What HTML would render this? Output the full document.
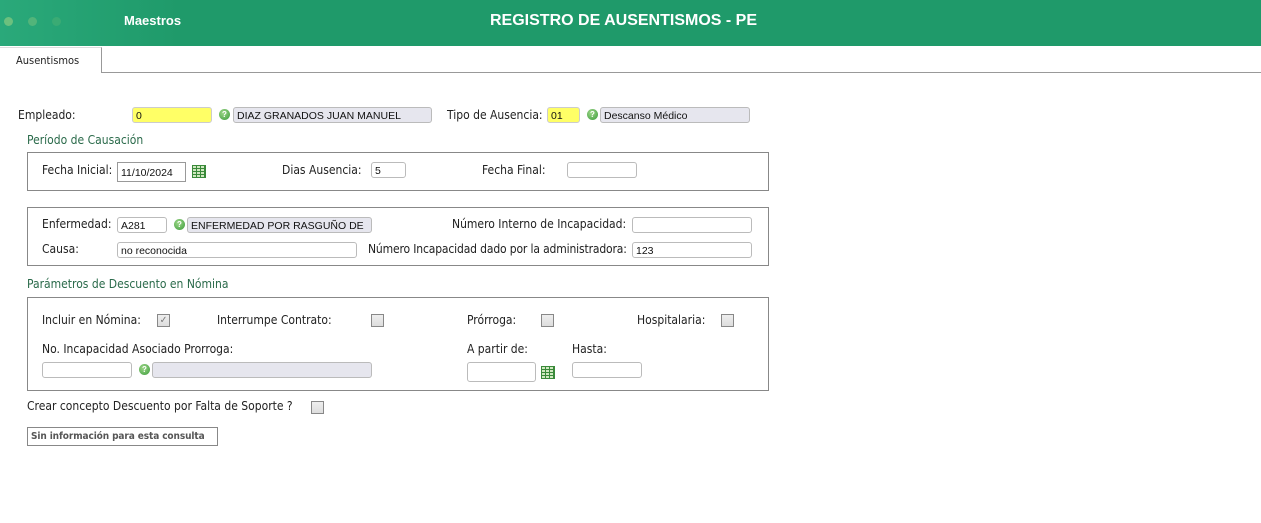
<!DOCTYPE html>
<html><head><meta charset="utf-8"><style>
*{margin:0;padding:0;box-sizing:border-box}
body{width:1261px;height:523px;background:#fff;position:relative;overflow:hidden;font-family:"DejaVu Sans Condensed","Liberation Sans",sans-serif;font-size:12px;color:#222}
.a{position:absolute;white-space:nowrap}
.hdr{position:absolute;left:0;top:0;width:1261px;height:46px;background:linear-gradient(90deg,#2aa97a 0,#1f9a6a 180px,#1f9a6a 100%)}
.dot{position:absolute;top:17px;width:9px;height:9px;border-radius:50%}
.l{position:absolute;white-space:nowrap;line-height:14px;transform:translateY(-7px)}
.in{position:absolute;height:16px;border:1px solid #bbb;border-radius:3px;background:#fff;font-size:10.5px;line-height:15px;padding-left:3px;padding-top:1px;font-family:"Liberation Sans",sans-serif;color:#111;white-space:nowrap;overflow:hidden}
.y{background:#ffff66;border-color:#ccc}
.g{background:#e6e6ee;border-color:#bbb}
.box{position:absolute;left:27px;width:742px;border:1px solid #888}
.cb{position:absolute;width:13px;height:13px;border:1px solid #888;background:linear-gradient(#eee,#ddd)}
.q{position:absolute;width:11px;height:11px;border-radius:50%;background:radial-gradient(circle at 40% 35%,#9fd88a,#3a9a3a);color:#fff;font-size:8px;font-weight:bold;line-height:11px;text-align:center;font-family:"Liberation Sans",sans-serif}
.cal{position:absolute;width:14px;height:13px;border:1px solid #3a8a3a;background:
repeating-linear-gradient(90deg,transparent 0 3px,#3a8a3a 3px 4px),repeating-linear-gradient(0deg,#cfe8bf 0 2px,#3a8a3a 2px 3px)}
.sec{color:#2a6a4a}
</style></head><body>
<div class="hdr">
<div class="dot" style="left:4px;background:#6cc07e"></div>
<div class="dot" style="left:28px;background:#52b47a"></div>
<div class="dot" style="left:52px;background:#3aab74"></div>
<div class="a" style="left:124px;top:13px;color:#fff;font-weight:bold;font-size:13px;font-family:'Liberation Sans',sans-serif">Maestros</div>
<div class="a" style="left:490px;top:12px;color:#fff;font-weight:bold;font-size:16px;font-family:'Liberation Sans',sans-serif">REGISTRO DE AUSENTISMOS - PE</div>
</div>
<div class="a" style="left:0;top:47px;width:102px;height:26px;border-right:1px solid #999;border-top:1px solid #ddd;background:#fff"></div>
<div class="a" style="left:101px;top:72px;width:1160px;height:1px;background:#999"></div>
<div class="l" style="left:16px;top:61px;font-size:11px">Ausentismos</div>

<div class="l" style="left:18px;top:115px">Empleado:</div>
<div class="in y" style="left:132px;top:107px;width:80px">0</div>
<div class="q" style="left:219px;top:109px">?</div>
<div class="in g" style="left:233px;top:107px;width:199px">DIAZ GRANADOS JUAN MANUEL</div>
<div class="l" style="left:447px;top:115px">Tipo de Ausencia:</div>
<div class="in y" style="left:547px;top:107px;width:33px">01</div>
<div class="q" style="left:587px;top:109px">?</div>
<div class="in g" style="left:600px;top:107px;width:150px">Descanso Médico</div>

<div class="l sec" style="left:27px;top:140px">Período de Causación</div>
<div class="box" style="top:152px;height:39px"></div>
<div class="l" style="left:42px;top:170px">Fecha Inicial:</div>
<div class="in" style="left:117px;top:162px;width:69px;height:20px;border-radius:0;line-height:18px;border-color:#999">11/10/2024</div>
<div class="cal" style="left:192px;top:165px"></div>
<div class="l" style="left:282px;top:170px">Dias Ausencia:</div>
<div class="in" style="left:371px;top:162px;width:35px">5</div>
<div class="l" style="left:482px;top:170px">Fecha Final:</div>
<div class="in" style="left:567px;top:162px;width:70px"></div>

<div class="box" style="top:207px;height:59px"></div>
<div class="l" style="left:42px;top:224px">Enfermedad:</div>
<div class="in" style="left:117px;top:217px;width:50px">A281</div>
<div class="q" style="left:174px;top:219px">?</div>
<div class="in g" style="left:187px;top:217px;width:185px">ENFERMEDAD POR RASGUÑO DE</div>
<div class="l" style="left:452px;top:224px">Número Interno de Incapacidad:</div>
<div class="in" style="left:632px;top:217px;width:120px"></div>
<div class="l" style="left:42px;top:249px">Causa:</div>
<div class="in" style="left:117px;top:242px;width:240px">no reconocida</div>
<div class="l" style="left:368px;top:249px;letter-spacing:-0.15px">Número Incapacidad dado por la administradora:</div>
<div class="in" style="left:632px;top:242px;width:120px">123</div>

<div class="l sec" style="left:27px;top:284px">Parámetros de Descuento en Nómina</div>
<div class="box" style="top:297px;height:94px"></div>
<div class="l" style="left:42px;top:320px">Incluir en Nómina:</div>
<div class="cb" style="left:157px;top:314px;color:#777;font-size:10px;line-height:11px;text-align:center">✓</div>
<div class="l" style="left:217px;top:320px">Interrumpe Contrato:</div>
<div class="cb" style="left:371px;top:314px"></div>
<div class="l" style="left:467px;top:320px">Prórroga:</div>
<div class="cb" style="left:541px;top:314px"></div>
<div class="l" style="left:637px;top:320px">Hospitalaria:</div>
<div class="cb" style="left:721px;top:314px"></div>
<div class="l" style="left:42px;top:349px">No. Incapacidad Asociado Prorroga:</div>
<div class="l" style="left:467px;top:349px">A partir de:</div>
<div class="l" style="left:572px;top:349px">Hasta:</div>
<div class="in" style="left:42px;top:362px;width:90px"></div>
<div class="q" style="left:139px;top:364px">?</div>
<div class="in g" style="left:152px;top:362px;width:220px"></div>
<div class="in" style="left:467px;top:362px;width:69px;height:20px"></div>
<div class="cal" style="left:541px;top:366px"></div>
<div class="in" style="left:572px;top:362px;width:70px"></div>

<div class="l" style="left:27px;top:406px">Crear concepto Descuento por Falta de Soporte ?</div>
<div class="cb" style="left:311px;top:401px"></div>
<div class="a" style="left:27px;top:427px;width:191px;height:19px;border:1px solid #888;font-size:10px;font-weight:bold;color:#555;line-height:17px;padding-left:3px;letter-spacing:-0.1px;overflow:hidden">Sin información para esta consulta</div>
</body></html>
